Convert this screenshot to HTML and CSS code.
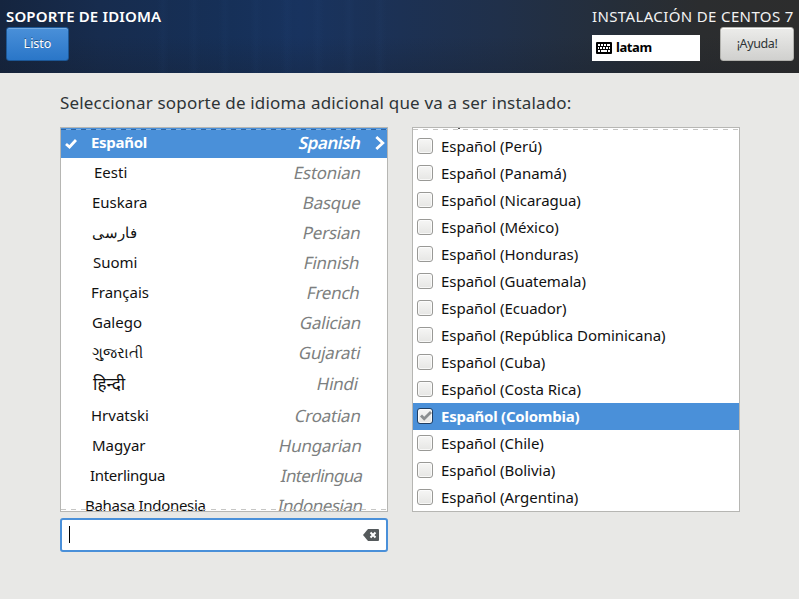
FILE: index.html
```html
<!DOCTYPE html>
<html lang="es">
<head>
<meta charset="utf-8">
<title>Soporte de idioma</title>
<link rel="stylesheet" href="styles.css">
</head>
<body>
<header class="top">
  <div class="top-left">
    <h1 class="title">SOPORTE DE IDIOMA</h1>
    <button class="btn btn-primary">Listo</button>
  </div>
  <div class="top-right">
    <div class="product">INSTALACIÓN DE CENTOS 7</div>
    <div class="tools">
      <div class="layout">
        <svg width="16" height="12" viewBox="0 0 16 12"><rect width="16" height="12" rx="1"/><path d="M2 3h2M5 3h2M8 3h2M11 3h3M2 6h1M4 6h2M7 6h2M10 6h2M13 6h1M2 9h2M5 9h6M12 9h2" stroke="#fff" stroke-width="2"/></svg>
        <span class="layout-name">latam</span>
      </div>
      <button class="btn btn-help">¡Ayuda!</button>
    </div>
  </div>
</header>
<main class="content">
  <p class="prompt">Seleccionar soporte de idioma adicional que va a ser instalado:</p>
  <div class="columns">
    <section class="left">
      <ul class="box languages">
        <li class="selected"><svg class="tick" width="12" height="10" viewBox="0 0 12 10"><path d="M1 5l3.5 3L11 1" fill="none" stroke="#fff" stroke-width="2.8"/></svg><span class="native">Español</span><span class="english">Spanish</span><svg class="arrow" width="10" height="14" viewBox="0 0 10 14"><path d="M1.3 1l6.5 6-6.5 6" fill="none" stroke="#fff" stroke-width="2.8"/></svg></li>
        <li><span class="native">Eesti</span><span class="english">Estonian</span></li>
        <li><span class="native">Euskara</span><span class="english">Basque</span></li>
        <li><span class="native" lang="fa">فارسی</span><span class="english">Persian</span></li>
        <li><span class="native">Suomi</span><span class="english">Finnish</span></li>
        <li><span class="native">Français</span><span class="english">French</span></li>
        <li><span class="native">Galego</span><span class="english">Galician</span></li>
        <li><span class="native" lang="gu">ગુજરાતી</span><span class="english">Gujarati</span></li>
        <li><span class="native" lang="hi">हिन्दी</span><span class="english">Hindi</span></li>
        <li><span class="native">Hrvatski</span><span class="english">Croatian</span></li>
        <li><span class="native">Magyar</span><span class="english">Hungarian</span></li>
        <li><span class="native">Interlingua</span><span class="english">Interlingua</span></li>
        <li><span class="native">Bahasa Indonesia</span><span class="english">Indonesian</span></li>
      </ul>
      <div class="search">
        <span class="caret"></span>
        <svg width="16" height="12" viewBox="0 0 16 12"><path d="M5 0h10q1 0 1 1v10q0 1-1 1H5L0 6z" fill="#555a5c"/><path d="M7.5 3.5l5 5M12.5 3.5l-5 5" stroke="#fff" stroke-width="2"/></svg>
      </div>
    </section>
    <ul class="box locales">
      <li><i class="check"></i><span>Español (Perú)</span></li>
      <li><i class="check"></i><span>Español (Panamá)</span></li>
      <li><i class="check"></i><span>Español (Nicaragua)</span></li>
      <li><i class="check"></i><span>Español (México)</span></li>
      <li><i class="check"></i><span>Español (Honduras)</span></li>
      <li><i class="check"></i><span>Español (Guatemala)</span></li>
      <li><i class="check"></i><span>Español (Ecuador)</span></li>
      <li><i class="check"></i><span>Español (República Dominicana)</span></li>
      <li><i class="check"></i><span>Español (Cuba)</span></li>
      <li><i class="check"></i><span>Español (Costa Rica)</span></li>
      <li class="selected"><i class="check"><svg width="14" height="14" viewBox="0 0 14 14"><path d="M3 6.5l3.2 3.3L13 3" fill="none" stroke="#8b8e8f" stroke-width="2.8"/></svg></i><span>Español (Colombia)</span></li>
      <li><i class="check"></i><span>Español (Chile)</span></li>
      <li><i class="check"></i><span>Español (Bolivia)</span></li>
      <li><i class="check"></i><span>Español (Argentina)</span></li>
    </ul>
  </div>
</main>
</body>
</html>
```
FILE: styles.css
```css
* { box-sizing: border-box; }
body {
  margin: 0;
  width: 799px;
  height: 599px;
  overflow: hidden;
  background: #e8e8e6;
  color: #111;
  font: 15px "Noto Sans", "Open Sans", sans-serif;
}
ul { list-style: none; margin: 0; padding: 0; }

.top {
  height: 73px;
  display: flex;
  justify-content: space-between;
  padding: 6px 5px 0 6px;
  color: #fff;
  background:
    repeating-linear-gradient(90deg, transparent 0 7px, rgba(60, 110, 180, .04) 13px, transparent 19px 31px) 150px 0 / 250px 100% no-repeat,
    linear-gradient(180deg, transparent 50%, rgba(20, 25, 35, .22)),
    linear-gradient(90deg, #15253f 0, #172c4e 100px, #163058 230px, #18335f 300px, #1c3154 400px, #20304a 500px, #252e3a 610px, #2b2d2f 700px, #2d2d2d 799px);
}
.title { margin: 0; padding-bottom: 1px; font-size: 15px; line-height: 20px; font-weight: 600; letter-spacing: .15px; white-space: nowrap; }
.top-right { width: 202px; }
.product { padding-bottom: 1px; font-size: 15px; line-height: 20px; letter-spacing: .37px; white-space: nowrap; color: #f2f2f2; }
.btn { display: block; height: 34px; padding: 0; border-radius: 3px; font: 12.5px/30px "Noto Sans", sans-serif; }
.btn-primary {
  width: 63px;
  color: #fff;
  border: 1px solid #1c5796;
  background: linear-gradient(#4a90d9, #2a76c8);
  box-shadow: inset 0 1px #76aae1;
  text-shadow: 0 -1px rgba(0, 0, 0, .4);
}
.btn-help {
  width: 74px;
  color: #2e3436;
  border: 1px solid #b1b1ad;
  background: linear-gradient(#ececea, #d0d0ce);
  box-shadow: inset 0 1px #fff;
  letter-spacing: -.4px;
}
.tools { display: flex; justify-content: space-between; }
.layout { display: flex; align-items: center; gap: 4px; width: 108px; height: 26px; margin-top: 8px; padding-left: 4px; background: #fff; color: #000; }
.layout-name { padding-bottom: 2px; font-size: 13px; font-weight: 700; letter-spacing: -.4px; }

.content { padding: 18px 59px 0 60px; }
.prompt { margin: 0 0 12px; font-size: 17px; line-height: 24px; letter-spacing: .18px; color: #2e3436; white-space: nowrap; }
.columns { display: flex; justify-content: space-between; align-items: flex-start; }
.box { position: relative; width: 328px; height: 385px; border: 1px solid #b6b6b3; background: #fff; overflow: hidden; }
.box::after {
  content: "";
  position: absolute;
  left: 0;
  right: 0;
  height: 1px;
  background: repeating-linear-gradient(90deg, #c6c6c4 0 5px, transparent 5px 10px);
}
.languages::after { bottom: 1px; }
.locales::after { top: 1px; }
.languages li { position: relative; display: flex; align-items: center; height: 30px; padding: 0 26px 0 31px; white-space: nowrap; }
.english { margin-left: auto; padding-bottom: 2px; font-size: 17px; letter-spacing: -.25px; color: #7d7f80; transform: skewX(-12deg); }
.native { padding-bottom: 2px; font-size: 15px; }
.languages .selected { background: #4a90d9; color: #fff; font-weight: 700; }
.languages .selected::before {
  content: "";
  position: absolute;
  top: 1px;
  left: 0;
  right: 0;
  height: 1px;
  background: repeating-linear-gradient(90deg, #2c65a5 0 5px, #79b0e8 5px 10px);
}
.selected .english { color: #fff; font-weight: 600; letter-spacing: -.45px; }
.selected .native { letter-spacing: -.3px; }
.tick { position: absolute; left: 4px; top: 11px; }
.arrow { position: absolute; right: 2px; top: 8px; }
.languages li:nth-child(1) { padding-left: 30px; }
.languages li:nth-child(2) { padding-left: 33px; }
.languages li:nth-child(5) { padding: 0 27px 0 32px; }
.languages li:nth-child(6) { padding: 0 27px 0 30px; }
.languages li:nth-child(9) { height: 33px; padding: 0 29px 0 32px; }
.languages li:nth-child(9) .native { font-size: 17px; }
.languages li:nth-child(10) { padding-left: 30px; }
.languages li:nth-child(11) { padding-right: 25px; }
.languages li:nth-child(12) { padding: 0 24px 0 29px; letter-spacing: -.3px; }
.languages li:nth-child(13) { padding: 0 24px 0 24px; letter-spacing: -.28px; }
.languages li:nth-child(12) .english { letter-spacing: -.65px; }
.languages li:nth-child(13) .english { letter-spacing: -.5px; }
.search { display: flex; align-items: center; justify-content: space-between; height: 34px; margin-top: 6px; padding: 0 7px; border: 2px solid #4a90d9; border-radius: 3px; background: #fff; }
.caret { width: 1px; height: 17px; margin-bottom: 1px; background: #000; }
.locales { padding-top: 5px; background: linear-gradient(#555, #555) 45px 0 / 2px 1px no-repeat #fff; }
.locales li { display: flex; align-items: center; height: 27px; padding-left: 4px; gap: 8px; white-space: nowrap; }
.locales span { padding-bottom: 2px; letter-spacing: -.03px; }
.check { display: block; width: 16px; height: 16px; margin-bottom: 1px; border: 1px solid #999996; border-radius: 3px; background: linear-gradient(#f6f6f5, #e6e6e4); box-shadow: inset 0 0 0 1px rgba(255, 255, 255, .7); }
.check svg { display: block; }
.locales .selected { background: #4a90d9; color: #fff; font-weight: 700; }
.locales .selected span { letter-spacing: -.23px; }
.selected .check { border-color: #1f3d61; }
```
